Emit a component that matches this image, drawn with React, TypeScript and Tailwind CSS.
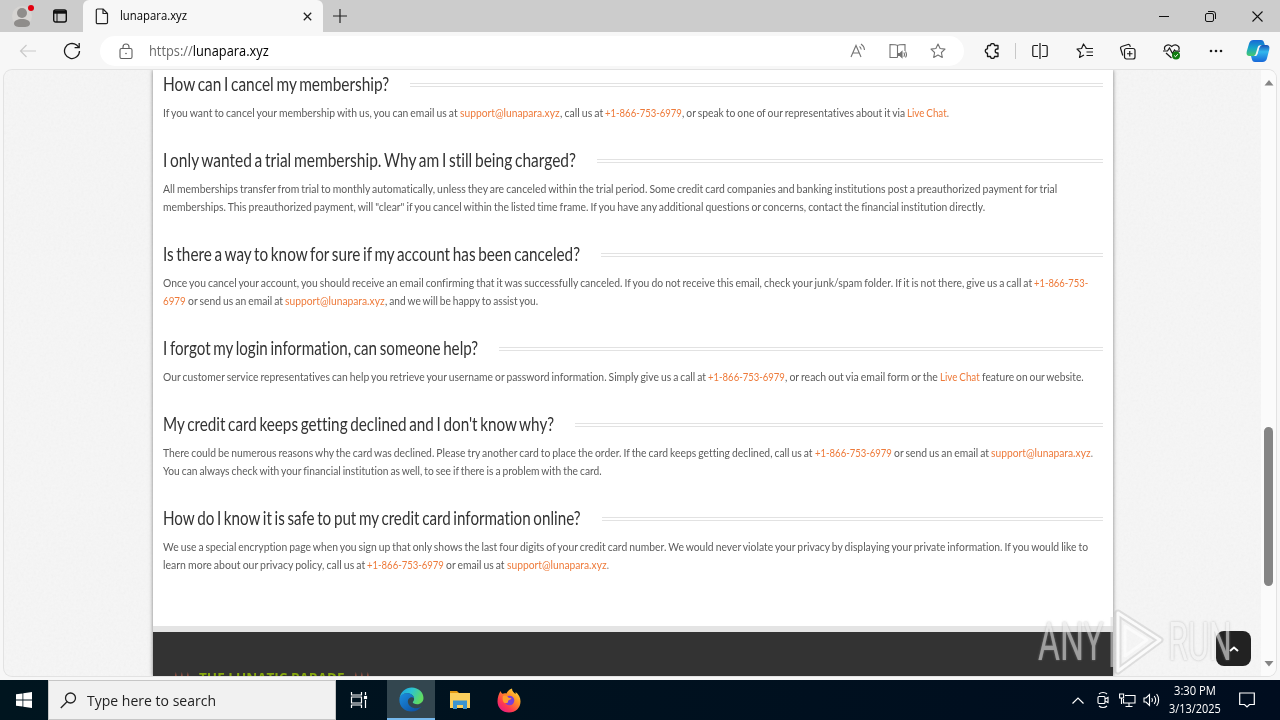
import { useLayoutEffect, useRef, useState } from "react"
import type { ReactNode } from "react"

type FitProps = {
  width: number
  className?: string
  children: ReactNode
}

// Squeezes its text horizontally to an exact width (stands in for a condensed face)
const Fit = ({ width, className = "", children }: FitProps) => {
  const ref = useRef<HTMLSpanElement>(null)
  const [scale, setScale] = useState(1)

  useLayoutEffect(() => {
    if (ref.current) setScale(width / ref.current.offsetWidth)
  }, [width])

  return (
    <span className={`inline-block shrink-0 whitespace-pre ${className}`} style={{ width }}>
      <span ref={ref} className="inline-block origin-left" style={{ transform: `scaleX(${scale})` }}>
        {children}
      </span>
    </span>
  )
}

type Segment = { text: string; width: number; link?: boolean }
type Question = { title: string; width: number; lines: Segment[][] }

const PHONE = "+1-866-753-6979"
const EMAIL = "support@lunapara.xyz"

const questions: Question[] = [
  {
    title: "How can I cancel my membership?",
    width: 226,
    lines: [
      [
        { text: "If you want to cancel your membership with us, you can email us at ", width: 297 },
        { text: EMAIL, width: 100, link: true },
        { text: ", call us at ", width: 45 },
        { text: PHONE, width: 77, link: true },
        { text: ", or speak to one of our representatives about it via ", width: 225 },
        { text: "Live Chat", width: 40, link: true },
        { text: ".", width: 2 },
      ],
    ],
  },
  {
    title: "I only wanted a trial membership. Why am I still being charged?",
    width: 413,
    lines: [
      [{ text: "All memberships transfer from trial to monthly automatically, unless they are canceled within the trial period. Some credit card companies and banking institutions post a preauthorized payment for trial", width: 894 }],
      [{ text: "memberships. This preauthorized payment, will \"clear\" if you cancel within the listed time frame. If you have any additional questions or concerns, contact the financial institution directly.", width: 822 }],
    ],
  },
  {
    title: "Is there a way to know for sure if my account has been canceled?",
    width: 417,
    lines: [
      [
        { text: "Once you cancel your account, you should receive an email confirming that it was successfully canceled. If you do not receive this email, check your junk/spam folder. If it is not there, give us a call at ", width: 871 },
        { text: "+1-866-753-", width: 54, link: true },
      ],
      [
        { text: "6979", width: 23, link: true },
        { text: " or send us an email at ", width: 99 },
        { text: EMAIL, width: 100, link: true },
        { text: ", and we will be happy to assist you.", width: 153 },
      ],
    ],
  },
  {
    title: "I forgot my login information, can someone help?",
    width: 315,
    lines: [
      [
        { text: "Our customer service representatives can help you retrieve your username or password information. Simply give us a call at ", width: 545 },
        { text: PHONE, width: 77, link: true },
        { text: ", or reach out via email form or the ", width: 155 },
        { text: "Live Chat", width: 40, link: true },
        { text: " feature on our website.", width: 104 },
      ],
    ],
  },
  {
    title: "My credit card keeps getting declined and I don't know why?",
    width: 391,
    lines: [
      [
        { text: "There could be numerous reasons why the card was declined. Please try another card to place the order. If the card keeps getting declined, call us at ", width: 652 },
        { text: PHONE, width: 77, link: true },
        { text: " or send us an email at ", width: 99 },
        { text: EMAIL, width: 100, link: true },
        { text: ".", width: 2 },
      ],
      [{ text: "You can always check with your financial institution as well, to see if there is a problem with the card.", width: 439 }],
    ],
  },
  {
    title: "How do I know it is safe to put my credit card information online?",
    width: 418,
    lines: [
      [{ text: "We use a special encryption page when you sign up that only shows the last four digits of your credit card number. We would never violate your privacy by displaying your private information. If you would like to", width: 925 }],
      [
        { text: "learn more about our privacy policy, call us at ", width: 204 },
        { text: PHONE, width: 77, link: true },
        { text: " or email us at ", width: 63 },
        { text: EMAIL, width: 100, link: true },
        { text: ".", width: 2 },
      ],
    ],
  },
]

const TitleBar = () => (
  <div className="flex h-8 shrink-0 bg-[#cccccc]">
    <div className="flex w-[83px] items-center rounded-br-md">
      <svg width="28" height="28" viewBox="0 0 28 28" className="ml-2">
        <circle cx="14" cy="14" r="10" fill="#d6d4d2" />
        <circle cx="14" cy="11" r="5" fill="#8f8d8b" />
        <path d="M6 21.500c0-3 3.500-4.500 8-4.500s8 1.500 8 4.500-3.500 3.500-8 3.500-8-.5-8-3.500z" fill="#8f8d8b" />
        <circle cx="23" cy="6" r="3" fill="#e3000f" />
      </svg>
      <svg width="16" height="16" viewBox="0 0 16 16" fill="none" stroke="#111" strokeWidth="1.400" className="ml-4">
        <rect x="1.700" y="2" width="12.600" height="12" rx="2" />
        <path d="M1.700 4.200h12.600" strokeWidth="3" />
        <path d="M5 5v9" strokeWidth="1" />
      </svg>
    </div>
    <div className="flex w-[240px] items-center rounded-t-md bg-[#f7f7f7] pl-3">
      <svg width="14" height="17" viewBox="0 0 14 17" fill="none" stroke="#222" strokeWidth="1.200" strokeLinejoin="round">
        <path d="M2.500 1h5.500l4.500 4.500V14.500a1.200 1.200 0 0 1-1.200 1.200H2.500a1.200 1.200 0 0 1-1.200-1.200V2.200A1.200 1.200 0 0 1 2.500 1z" />
        <path d="M8 1v4.500h4.500" />
      </svg>
      <Fit width={67} className="ml-[11px] text-[12px] text-black">lunapara.xyz</Fit>
      <svg width="9" height="9" viewBox="0 0 9 9" stroke="#222" strokeWidth="1.300" className="mr-[11px] ml-auto">
        <path d="M.8.8l7.400 7.400M8.200.8L.8 8.200" />
      </svg>
    </div>
    <svg width="14" height="14" viewBox="0 0 14 14" stroke="#222" strokeWidth="1.200" className="mt-[9px] ml-[10px]">
      <path d="M7 0v14M0 7h14" />
    </svg>
    <div className="mr-[17px] ml-auto flex items-center gap-9">
      <svg width="10" height="10" viewBox="0 0 10 10" stroke="#111">
        <path d="M0 5.500h10" />
      </svg>
      <svg width="11" height="11" viewBox="0 0 11 11" fill="none" stroke="#111">
        <rect x=".5" y="2.500" width="8" height="8" rx="1.500" />
        <path d="M3 .5h5a2.500 2.500 0 0 1 2.500 2.500v5" />
      </svg>
      <svg width="11" height="11" viewBox="0 0 11 11" stroke="#111" strokeWidth="1.100">
        <path d="M.5.5l10 10M10.500.5l-10 10" />
      </svg>
    </div>
  </div>
)

const STAR = "M8 1l2.100 4.500 4.900.6-3.600 3.400.9 4.900L8 12l-4.300 2.400.9-4.900L1 6.100l4.900-.6z"

const Toolbar = () => (
  <div className="flex h-[38px] shrink-0 items-center bg-[#f7f7f7]">
    <svg width="18" height="14" viewBox="0 0 18 14" fill="none" stroke="#c9c9c9" strokeWidth="1.200" className="ml-[19px]">
      <path d="M17 7H1.500M7.500 1l-6 6 6 6" />
    </svg>
    <svg width="18" height="18" viewBox="0 0 18 18" fill="none" stroke="#1a1a1a" strokeWidth="1.300" className="ml-[26px]">
      <path d="M16.500 9A7.500 7.500 0 1 1 13.600 3.100L16 5.400" />
      <path d="M16.200 1v4.600h-4.600" />
    </svg>
    <div className="ml-[19px] flex h-[30px] w-[864px] items-center rounded-full bg-white">
      <svg width="14" height="17" viewBox="0 0 14 17" fill="none" stroke="#5f5f5f" strokeWidth="1.100" className="ml-[19px]">
        <rect x="1" y="5.500" width="12" height="10" rx="1.500" />
        <path d="M4 5.500V4a3 3 0 0 1 6 0v1.500" />
        <circle cx="7" cy="10.500" r=".8" fill="#5f5f5f" stroke="none" />
      </svg>
      <Fit width={120} className="mb-px ml-4 text-[14px] text-black">
        <span className="text-[#6b6b6b]">https://</span>lunapara.xyz
      </Fit>
      <svg width="17" height="16" viewBox="0 0 17 16" fill="none" stroke="#737373" strokeWidth="1.100" className="ml-auto">
        <path d="M1 14L6 2.500 11 14M2.700 10h6.600M9.500 3.500c1 .7 1.500 1.700 1.700 3M11 1c2 1.200 3.200 3.200 3.500 6" />
      </svg>
      <svg width="18" height="16" viewBox="0 0 18 16" fill="none" stroke="#737373" strokeWidth="1.100" className="ml-[22px]">
        <path d="M8.500 2v12.500M8.500 2.500C7.500 1.500 6 1.500 1 1.500v13h7.500M8.500 2.500c1-1 2.500-1 7.500-1V8" />
        <path d="M9.500 10.500h1.500l2-2v6l-2-2H9.500z" fill="#737373" />
        <path d="M14.800 9.500c.8 1.200.8 3 0 4.200M16.500 8.500c1.200 2 1.200 4.300 0 6" />
      </svg>
      <svg width="16" height="16" viewBox="0 0 16 16" fill="none" stroke="#737373" strokeWidth="1.100" strokeLinejoin="round" className="mr-[18px] ml-[23px]">
        <path d={STAR} />
      </svg>
    </div>
    <svg width="16" height="16" viewBox="0 0 16 16" fill="none" stroke="#1a1a1a" strokeWidth="1.300" strokeLinejoin="round" className="ml-5">
      <path d="M4.500 2.500H6.500a2 2 0 0 1 4 0H14V6h-.8a2 2 0 0 0 0 4h.8v3.500h-3.500a2 2 0 0 1-4 0h-3V10.200a2.200 2.200 0 1 1 0-4.400V3.500a1 1 0 0 1 1-1z" />
    </svg>
    <div className="ml-[15px] h-4 w-px bg-[#c8c8c8]" />
    <svg width="16" height="16" viewBox="0 0 16 16" fill="none" stroke="#1a1a1a" strokeWidth="1.200" className="ml-4">
      <path d="M6 2.500H2A1.200 1.200 0 0 0 .8 3.700v8.600A1.200 1.200 0 0 0 2 13.500h4M10 2.500h4a1.200 1.200 0 0 1 1.200 1.200v8.600a1.200 1.200 0 0 1-1.200 1.200h-4M8 0v16" />
    </svg>
    <svg width="18" height="16" viewBox="0 0 18 16" fill="none" stroke="#1a1a1a" strokeWidth="1.200" strokeLinejoin="round" className="ml-7">
      <path d="M10.500 5.500L7.500 1 5.600 5.500 1 6l3.500 3.500-1 5L8 12M9.500 5.500H17M10.500 9H17M10.500 12.500H17" />
    </svg>
    <svg width="17" height="17" viewBox="0 0 17 17" fill="none" stroke="#1a1a1a" strokeWidth="1.200" className="ml-[25px]">
      <path d="M3.800 12.500L1.600 5.500A1.600 1.600 0 0 1 2.700 3.500L9 1.500a1.600 1.600 0 0 1 2 1.200l.3 1.100" />
      <rect x="5.500" y="5.500" width="10.500" height="10.500" rx="2" />
      <path d="M10.750 8v5.500M8 10.750h5.500" />
    </svg>
    <svg width="18" height="17" viewBox="0 0 18 17" fill="none" stroke="#1a1a1a" strokeWidth="1.200" className="ml-[27px]">
      <path d="M2 7C0 3 5 .2 8.700 3.500 12.500.2 17.500 3 15.700 7M0 8h4.500L6.500 5l3 5.500L11.500 7l1 1.200H17M3 10l5.500 5" />
      <circle cx="13" cy="12.500" r="4" fill="#107c10" stroke="none" />
      <path d="M11.200 12.500l1.300 1.300 2.300-2.600" stroke="#fff" strokeWidth="1" />
    </svg>
    <svg width="14" height="4" viewBox="0 0 14 4" fill="#1a1a1a" className="ml-[28px]">
      <circle cx="2" cy="2" r="1.300" />
      <circle cx="7" cy="2" r="1.300" />
      <circle cx="12" cy="2" r="1.300" />
    </svg>
    <svg width="24" height="24" viewBox="0 0 24 24" className="ml-[23px]">
      <defs>
        <linearGradient id="cpA" x1="0" y1="0" x2="0" y2="1">
          <stop offset="0" stopColor="#1768d6" />
          <stop offset=".5" stopColor="#15a6c9" />
          <stop offset="1" stopColor="#49c96c" />
        </linearGradient>
        <linearGradient id="cpB" x1="0" y1="0" x2="0" y2="1">
          <stop offset="0" stopColor="#1b4fb5" />
          <stop offset=".4" stopColor="#32b8ed" />
          <stop offset="1" stopColor="#1767d8" />
        </linearGradient>
      </defs>
      <path d="M7.500 1H15c2 0 2.600 1 3.200 3l.6 2H16c-2 0-3 1-3.500 3l-1.500 5c-.6 2-1.500 3-3.500 3H3.500C1 17 0 15 .8 12.200L3 4.800C3.700 2.300 5 1 7.500 1z" fill="url(#cpA)" />
      <path d="M16.500 23H9c-2 0-2.600-1-3.200-3l-.8-3h3c2 0 3-1 3.500-3L13 9c.6-2 1.500-3 3.500-3h4c2.500 0 3.500 2 2.700 4.800L21 19.200c-.7 2.500-2 3.800-4.500 3.800z" fill="url(#cpB)" />
      <path d="M13 6.500h2.500c-1.500.6-2 1.500-2.500 3.200L11.500 15c-.5 1.300-1 2-2 2H8c1-.5 1.500-1.500 2-3l1.500-5c.3-1 .7-2 1.500-2.500z" fill="#f7f7f7" />
    </svg>
  </div>
)

const Section = ({ title, width, lines }: Question) => (
  <section className="mb-[26px]">
    <div className="mb-1.5 flex h-[26px] items-center">
      <Fit width={width} className="mb-0.5 text-[18.5px] leading-[26px] [word-spacing:-1.5px] text-[#333333]">{title}</Fit>
      <div className="ml-[21px] h-1 grow border-y border-[#e2e2e2]" />
    </div>
    {lines.map((line, i) => (
      <p key={i} className="flex h-[18px] text-[11.5px] leading-[18px] [word-spacing:-0.7px] text-[#5c5c5c]">
        {line.map((s, j) => (
          <Fit key={j} width={s.width} className={s.link ? "text-[#ee7a3a]" : ""}>{s.text}</Fit>
        ))}
      </p>
    ))}
  </section>
)

const Grain = () => (
  <svg className="absolute inset-0 h-full w-full opacity-[0.06]">
    <filter id="grain">
      <feTurbulence type="fractalNoise" baseFrequency="0.4" numOctaves="2" />
      <feColorMatrix type="saturate" values="0" />
    </filter>
    <rect width="100%" height="100%" filter="url(#grain)" />
  </svg>
)

const Watermark = () => (
  <div className="absolute top-[539px] left-[1034px] flex h-[66px] items-center opacity-60">
    <Fit width={66} className="font-['Roboto'] text-[53px] leading-[66px] text-[#e6e6e6] [text-shadow:0_0_3px_#999]">ANY</Fit>
    <svg width="56" height="66" viewBox="0 0 56 66" fill="none" strokeLinejoin="round" className="mx-1">
      <path d="M10 4L52 31 10 62z" stroke="#aaa" strokeWidth="7" opacity=".5" />
      <path d="M10 4L52 31 10 62zM17 17L39 31 17 47z" stroke="#fff" strokeWidth="3" />
      <path d="M4 8v50" stroke="#ddd" strokeWidth="3" />
    </svg>
    <Fit width={64} className="font-['Roboto'] text-[53px] leading-[66px] text-[#f2f2f2] [text-shadow:0_0_3px_#999]">RUN</Fit>
  </div>
)

const Page = () => (
  <div className="relative mx-1 mb-1 flex h-[606px] shrink-0 overflow-hidden rounded-lg bg-[#f6f6f6] ring-1 ring-[#e2e2e2]">
    <Grain />
    <div className="relative ml-[149px] flex w-[960px] flex-col bg-white shadow-[0_0_4px_rgba(0,0,0,0.5)]">
      <main className="h-[556px] px-2.5 pt-0.5 font-['Lato'] [font-variant-ligatures:none]">
        {questions.map((q) => (
          <Section key={q.title} {...q} />
        ))}
      </main>
      <footer className="h-[50px] overflow-hidden border-t-[6px] border-[#e4e4e4] bg-[#333333] pt-[37px] pl-5">
        <div className="flex font-['Open_Sans'] text-[14px] leading-[18px] font-bold">
          <Fit width={18} className="text-[#c0604c]">★★★</Fit>
          <Fit width={146} className="mx-2 text-[#86a80c]">THE LUNATIC PARADE</Fit>
          <Fit width={18} className="text-[#c0604c]">★★★</Fit>
        </div>
      </footer>
    </div>
    <div className="relative ml-auto flex w-[15px] flex-col items-center bg-[#fbfbfb]">
      <svg width="10" height="6" viewBox="0 0 10 6" className="mt-[10px]">
        <path d="M5 0l4.500 5.500h-9z" fill="#858585" />
      </svg>
      <div className="mt-[341px] h-[159px] w-[9px] rounded-full bg-[#858585]" />
      <svg width="10" height="6" viewBox="0 0 10 6" className="mt-auto mb-[9px]">
        <path d="M5 5.500L.5 0h9z" fill="#858585" />
      </svg>
    </div>
    <div className="absolute top-[561px] left-[1212px] flex h-[35px] w-[35px] items-center justify-center rounded-lg bg-[#222222]">
      <svg width="10" height="6" viewBox="0 0 10 6" fill="none" stroke="#fff" strokeWidth="2">
        <path d="M1 5l4-3.500L9 5" />
      </svg>
    </div>
    <Watermark />
  </div>
)

const Taskbar = () => (
  <div className="flex h-10 shrink-0 bg-linear-to-r from-[#00151f] to-[#000d1f] text-white">
    <div className="flex w-12 items-center justify-center">
      <svg width="16" height="16" viewBox="0 0 16 16" fill="#fff">
        <path d="M0 2.300l6.500-.9v6.200H0zM7.300 1.300L16 0v7.600H7.300zM0 8.400h6.500v6.200L0 13.700zM7.300 8.400H16V16l-8.700-1.300z" />
      </svg>
    </div>
    <div className="flex w-[288px] items-center border border-[#c6c6c6] bg-[#f1f1f1] text-[#222222]">
      <svg width="17" height="17" viewBox="0 0 17 17" fill="none" stroke="#222" strokeWidth="1.300" className="ml-[11px]">
        <circle cx="10.500" cy="6" r="5" />
        <path d="M7 9.700L.8 16" />
      </svg>
      <Fit width={129} className="ml-[10px] text-[15px]">Type here to search</Fit>
    </div>
    <div className="flex w-[51px] items-center pl-[14px]">
      <svg width="18" height="18" viewBox="0 0 18 18" fill="none" stroke="#fff" strokeWidth="1.200">
        <path d="M1.500 1v3h10V1M1.500 17v-3h10v3M1.500 6h10v6h-10zM15.500 1v3M15.500 9v8" />
        <rect x="14.500" y="5.500" width="2" height="2" fill="#fff" />
      </svg>
    </div>
    <div className="flex w-12 items-center justify-center border-b-2 border-[#76b9ed] bg-[#33464f]">
      <svg width="25" height="25" viewBox="0 0 24 24">
        <defs>
          <linearGradient id="edgeTop" x1="0" y1="0" x2="1" y2=".4">
            <stop offset="0" stopColor="#1b9de2" />
            <stop offset=".5" stopColor="#2bc3d2" />
            <stop offset="1" stopColor="#5fdb62" />
          </linearGradient>
          <linearGradient id="edgeLow" x1="0" y1="0" x2="1" y2="1">
            <stop offset="0" stopColor="#1b8ee0" />
            <stop offset="1" stopColor="#0c4a9c" />
          </linearGradient>
        </defs>
        <path d="M.5 11C1.500 4.500 6.500.5 12.200.5 19 .5 23.500 5.500 23.500 10.500c0 3.800-3 6-6 6-2.500 0-4.300-.8-4.300-1.800 0-.7 1.300-1.200 1.300-3.200C14.500 8.500 11.500 6 8 6 4.500 6 2 8 .5 11z" fill="url(#edgeTop)" />
        <path d="M.5 11C1.500 7.800 4.500 6 8 6c3.300 0 6.200 2 6.500 4.800C13.500 9.800 12.300 9.500 11 10c-2 .8-3 3-2.300 5.400 1 3.200 4.300 5.200 7.800 5 2-.1 3.800-.9 5-1.700-2 3-5.500 4.800-9.500 4.800C5 23.500-.5 18 .5 11z" fill="url(#edgeLow)" />
      </svg>
    </div>
    <div className="flex w-[50px] items-center justify-center">
      <svg width="22" height="20" viewBox="0 0 22 20">
        <path d="M1 1h7l2 2h-9z" fill="#e39a12" />
        <path d="M1 3h20v15H1z" fill="#fbcf5c" />
        <path d="M4 10.500h14V19h-4v-4H8v4H4z" fill="#3a93d0" />
      </svg>
    </div>
    <div className="flex w-12 items-center justify-center">
      <svg width="24" height="25" viewBox="0 0 24 25">
        <defs>
          <linearGradient id="fx" x1="1" y1="0" x2=".2" y2="1">
            <stop offset="0" stopColor="#fff04a" />
            <stop offset=".4" stopColor="#ff9524" />
            <stop offset=".75" stopColor="#ff3850" />
            <stop offset="1" stopColor="#e3198a" />
          </linearGradient>
        </defs>
        <path d="M3.500 3c.3 1.300 1 2 2 2.800C7 5 8.300 5 9.500 5.500 10.500 3 12.500 1.500 15 .5c0 3 2 4 3.500 5.500.2-.8.200-1.300 0-2 3 2 5 5.500 5 9.500C23.500 20 18.500 24.500 12 24.500S.5 20 .5 13.500C.5 9 1.800 6 3.500 3z" fill="url(#fx)" />
        <circle cx="12.500" cy="12.500" r="4.800" fill="#7a3fd6" />
        <path d="M6 8c2.500-1 4.500 0 5.500 1.700l3 .5c-.5 1.500-3 1.500-3.500 3 .5 2-1.500 2.300-4 1.500C5.500 13 5.300 10 6 8z" fill="#ff9d2c" />
      </svg>
    </div>
    <div className="ml-auto flex items-center pr-[25px]">
      <svg width="12" height="7" viewBox="0 0 12 7" fill="none" stroke="#fff" strokeWidth="1.200">
        <path d="M.5 6.500L6 1l5.500 5.500" />
      </svg>
      <svg width="12" height="18" viewBox="0 0 12 18" fill="none" stroke="#fff" strokeWidth="1.100" className="ml-[13px]">
        <rect x="1" y="5.500" width="7" height="7" rx="1" />
        <path d="M8 8l3-1.500v5L8 10M2 3c2-2 6-2 8 0M2 15c2 2 6 2 8 0" />
      </svg>
      <svg width="17" height="15" viewBox="0 0 17 15" fill="none" stroke="#fff" strokeWidth="1.100" className="ml-[10px]">
        <path d="M6 2.500h10v7.500H4.500V6M10 10v3.500M6.500 13.500h7M.6 1h4v4h-4zM2.500 5v6" />
      </svg>
      <svg width="17" height="14" viewBox="0 0 17 14" fill="none" stroke="#fff" strokeWidth="1.100" className="ml-[7px]">
        <path d="M1 5h2l3.500-3.500v11L3 9H1zM8.800 5c.8 1.200.8 2.800 0 4M11.200 3c1.700 2.300 1.700 5.700 0 8M13.600 1c2.700 3.400 2.700 8.600 0 12" />
      </svg>
      <div className="ml-2 flex w-[54px] flex-col items-center text-[12px] leading-[18px]">
        <Fit width={42}>3:30 PM</Fit>
        <Fit width={52}>3/13/2025</Fit>
      </div>
      <svg width="16" height="16" viewBox="0 0 16 16" fill="none" stroke="#fff" strokeWidth="1.200" className="ml-[17px]">
        <path d="M.7 1h14.600v11.500h-4.800L8 15l-2.500-2.500H.7z" />
      </svg>
    </div>
  </div>
)

export default function App() {
  return (
    <div className="flex h-[720px] w-[1280px] flex-col overflow-hidden bg-[#f7f7f7] font-['Open_Sans',sans-serif]">
      <TitleBar />
      <Toolbar />
      <Page />
      <Taskbar />
    </div>
  )
}
